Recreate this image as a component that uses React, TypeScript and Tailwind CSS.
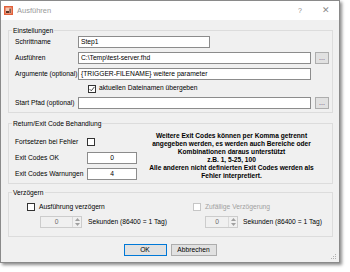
import React from 'react';

const font = "font-['Liberation_Sans',Arial,sans-serif]";

function TextBox({ w, value, center }: { w: string; value?: string; center?: boolean }) {
  return (
    <div
      className={`${w} h-[12px] bg-white border border-[#8c8c8c] flex items-center px-[2px] text-[6.7px] leading-none text-black ${center ? 'justify-center' : ''}`}
    >
      {value}
    </div>
  );
}

function Browse() {
  return (
    <div className="w-[14px] h-[12px] ml-[4px] bg-[#e1e1e1] border border-[#adadad] flex items-center justify-center text-[7px] leading-none text-[#5a3a6a] pb-[2px]">
      ...
    </div>
  );
}

function Check({ checked, disabled }: { checked?: boolean; disabled?: boolean }) {
  return (
    <div
      className={`w-[8px] h-[8px] shrink-0 bg-white border ${disabled ? 'border-[#c6c6c6]' : 'border-[#333333]'} flex items-center justify-center`}
    >
      {checked && (
        <svg width="6" height="6" viewBox="0 0 6 6">
          <path d="M0.6 3.1 L2.3 4.8 L5.4 0.9" fill="none" stroke="#333" strokeWidth="0.9" />
        </svg>
      )}
    </div>
  );
}

function Spinner({ w }: { w: string }) {
  return (
    <div className={`${w} h-[12px] bg-[#f0f0f0] border border-[#cccccc] flex`}>
      <div className="flex-1 flex items-center justify-center text-[6.7px] leading-none text-[#6d6d6d]">0</div>
      <div className="w-[9px] border-l border-[#dadada] flex flex-col items-center justify-center gap-[2px]">
        <svg width="5" height="3" viewBox="0 0 5 3">
          <path d="M0 3 L2.5 0 L5 3 Z" fill="#a0a0a0" />
        </svg>
        <svg width="5" height="3" viewBox="0 0 5 3">
          <path d="M0 0 L2.5 3 L5 0 Z" fill="#a0a0a0" />
        </svg>
      </div>
    </div>
  );
}

function Group({ title, children }: { title: string; children: React.ReactNode }) {
  return (
    <fieldset className="m-0 p-0 border border-[#dcdcdc] min-w-0">
      <legend className="ml-[3px] px-[1px] text-[6.7px] leading-[9px] text-black">{title}</legend>
      {children}
    </fieldset>
  );
}

export default function App() {
  return (
    <div className={`w-[350px] h-[272px] bg-white overflow-hidden whitespace-nowrap ${font}`}>
      <div className="relative w-[340px] h-[263px] border border-[#8a8a8a] shadow-[2px_2px_3px_rgba(0,0,0,0.45)] flex flex-col">
        {/* title bar */}
        <div className="h-[19px] bg-white flex items-center pl-[3px]">
          <svg width="9" height="9" viewBox="0 0 9 9" className="shrink-0">
            <rect x="0" y="0" width="9" height="9" fill="#e2603a" />
            <rect x="1.5" y="1.5" width="6" height="6" fill="#f6c7b2" />
            <rect x="2" y="5" width="3" height="2" fill="#5a3325" />
            <rect x="5.5" y="2.5" width="1.2" height="4.5" fill="#5a3325" />
          </svg>
          <span className="ml-[4px] text-[7.5px] leading-none text-[#9a9a9a]">Ausführen</span>
          <span className="ml-auto text-[7px] leading-none text-[#8a8a8a]">?</span>
          <span className="ml-[20px] mr-[9px] text-[9px] leading-none text-[#8a8a8a] font-light">✕</span>
        </div>

        {/* body */}
        <div className="flex-1 bg-[#f0f0f0] pl-[7px] pr-[6px] pt-[6px] text-[6.7px] leading-none text-black">
          <Group title="Einstellungen">
            <div className="pl-[6px] pr-[2px] pt-[1px] pb-[3px] flex flex-col gap-[4px]">
              <div className="flex items-center h-[12px]">
                <span className="w-[63px]">Schrittname</span>
                <TextBox w="w-[132px]" value="Step1" />
              </div>
              <div className="flex items-center h-[12px]">
                <span className="w-[63px]">Ausführen</span>
                <TextBox w="w-[233px]" value="C:\Temp\test-server.fhd" />
                <Browse />
              </div>
              <div className="flex items-center h-[12px]">
                <span className="w-[63px]">Argumente (optional)</span>
                <TextBox w="w-[233px]" value="{TRIGGER-FILENAME} weitere parameter" />
              </div>
              <div className="flex items-center h-[9px] pl-[73px]">
                <Check checked />
                <span className="ml-[3px]">aktuellen Dateinamen übergeben</span>
              </div>
              <div className="flex items-center h-[12px]">
                <span className="w-[63px]">Start Pfad (optional)</span>
                <TextBox w="w-[233px]" />
                <Browse />
              </div>
            </div>
          </Group>

          <div className="mt-[6px]">
            <Group title="Return/Exit Code Behandlung">
              <div className="pl-[6px] pr-[6px] pt-[8px] pb-[3px] flex items-center">
                <div className="flex flex-col gap-[4px] shrink-0">
                  <div className="flex items-center h-[12px]">
                    <span className="w-[72px]">Fortsetzen bei Fehler</span>
                    <Check />
                  </div>
                  <div className="flex items-center h-[12px]">
                    <span className="w-[72px]">Exit Codes OK</span>
                    <TextBox w="w-[50px]" value="0" center />
                  </div>
                  <div className="flex items-center h-[12px]">
                    <span className="w-[72px]">Exit Codes Warnungen</span>
                    <TextBox w="w-[50px]" value="4" center />
                  </div>
                </div>
                <div className="flex-1 text-center font-bold text-[6.6px] leading-[8px] -mt-[4px]">
                  Weitere Exit Codes können per Komma getrennt
                  <br />
                  angegeben werden, es werden auch Bereiche oder
                  <br />
                  Kombinationen daraus unterstützt
                  <br />
                  z.B. 1, 5-25, 100
                  <br />
                  Alle anderen nicht definierten Exit Codes werden als
                  <br />
                  Fehler interpretiert.
                </div>
              </div>
            </Group>
          </div>

          <div className="mt-[4px]">
            <Group title="Verzögern">
              <div className="pl-[18px] pt-[5px] pb-[8px] flex">
                <div className="w-[166px] flex flex-col gap-[4px]">
                  <div className="flex items-center h-[10px]">
                    <Check />
                    <span className="ml-[4px]">Ausführung verzögern</span>
                  </div>
                  <div className="flex items-center h-[12px] pl-[13px]">
                    <Spinner w="w-[42px]" />
                    <span className="ml-[6px]">Sekunden (86400 = 1 Tag)</span>
                  </div>
                </div>
                <div className="flex flex-col gap-[4px]">
                  <div className="flex items-center h-[10px]">
                    <Check disabled />
                    <span className="ml-[4px] text-[#a0a0a0]">Zufällige Verzögerung</span>
                  </div>
                  <div className="flex items-center h-[12px] pl-[12px]">
                    <Spinner w="w-[33px]" />
                    <span className="ml-[5px]">Sekunden (86400 = 1 Tag)</span>
                  </div>
                </div>
              </div>
            </Group>
          </div>

          <div className="mt-[7px] flex justify-center gap-[4px] pr-[1px]">
            <div className="w-[43px] h-[12px] bg-[#e1e1e1] border border-[#0078d7] flex items-center justify-center">
              OK
            </div>
            <div className="w-[46px] h-[12px] bg-[#e1e1e1] border border-[#adadad] flex items-center justify-center">
              Abbrechen
            </div>
          </div>
        </div>

        {/* resize grip */}
        <svg width="6" height="6" viewBox="0 0 6 6" className="absolute right-[2px] bottom-[2px]">
          <rect x="4" y="0" width="1" height="1" fill="#b0b0b0" />
          <rect x="2" y="2" width="1" height="1" fill="#b0b0b0" />
          <rect x="4" y="2" width="1" height="1" fill="#b0b0b0" />
          <rect x="0" y="4" width="1" height="1" fill="#b0b0b0" />
          <rect x="2" y="4" width="1" height="1" fill="#b0b0b0" />
          <rect x="4" y="4" width="1" height="1" fill="#b0b0b0" />
        </svg>
      </div>
    </div>
  );
}
